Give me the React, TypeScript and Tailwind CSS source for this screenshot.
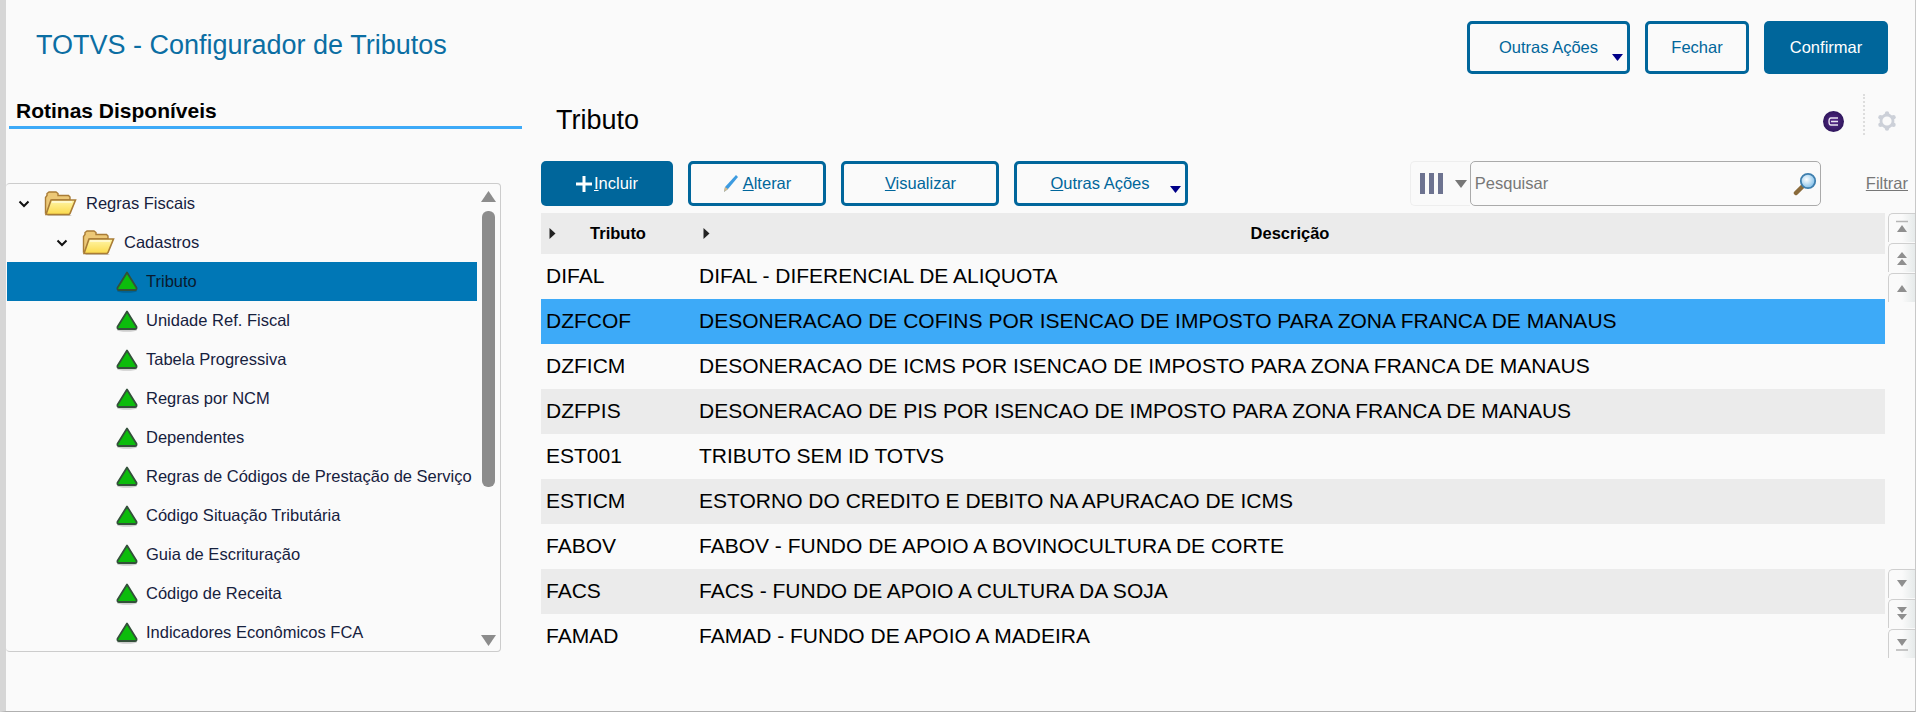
const treeItems = [
  "Tributo",
  "Unidade Ref. Fiscal",
  "Tabela Progressiva",
  "Regras por NCM",
  "Dependentes",
  "Regras de Códigos de Prestação de Serviço",
  "Código Situação Tributária",
  "Guia de Escrituração",
  "Código de Receita",
  "Indicadores Econômicos FCA",
];

const rows = [
  ["DIFAL", "DIFAL - DIFERENCIAL DE ALIQUOTA"],
  ["DZFCOF", "DESONERACAO DE COFINS POR ISENCAO DE IMPOSTO PARA ZONA FRANCA DE MANAUS"],
  ["DZFICM", "DESONERACAO DE ICMS POR ISENCAO DE IMPOSTO PARA ZONA FRANCA DE MANAUS"],
  ["DZFPIS", "DESONERACAO DE PIS POR ISENCAO DE IMPOSTO PARA ZONA FRANCA DE MANAUS"],
  ["EST001", "TRIBUTO SEM ID TOTVS"],
  ["ESTICM", "ESTORNO DO CREDITO E DEBITO NA APURACAO DE ICMS"],
  ["FABOV", "FABOV - FUNDO DE APOIO A BOVINOCULTURA DE CORTE"],
  ["FACS", "FACS - FUNDO DE APOIO A CULTURA DA SOJA"],
  ["FAMAD", "FAMAD - FUNDO DE APOIO A MADEIRA"],
];

const Chevron = () => (
  <svg width="12" height="8" viewBox="0 0 12 8" className="shrink-0">
    <path d="M1.500 1.500 6 6l4.500-4.500" fill="none" stroke="#111" strokeWidth="2" />
  </svg>
);

const Folder = ({ id }: { id: string }) => (
  <svg width="33" height="26" viewBox="0 0 33 26" className="shrink-0">
    <defs>
      <linearGradient id={id} x1="0" y1="0" x2="0" y2="1">
        <stop offset="0" stopColor="#fff6a8" />
        <stop offset="1" stopColor="#fbd94a" />
      </linearGradient>
    </defs>
    <path d="M3 25h23l2-1-24 0z" fill="#c9c4ba" />
    <path
      d="M1.500 22V6.500l1.500-2V2.500L5 1h7l2 1.500v2h10.500l1.500 1.500V9H8L3 22z"
      fill="#ecc877"
      stroke="#a97c36"
      strokeWidth="1.400"
    />
    <path d="M7 9h24.500L26 22.500l-1 1H2z" fill={`url(#${id})`} stroke="#a97c36" strokeWidth="1.600" />
    <path d="M8 11h20" stroke="#fffbe0" strokeWidth="1.400" />
  </svg>
);

const Triangle = () => (
  <svg width="22" height="22" viewBox="0 0 22 22" className="shrink-0">
    <ellipse cx="11" cy="20" rx="10" ry="1.800" fill="#000000" fillOpacity="0.18" />
    <path
      d="M11 1.500 20.500 16.800Q21 19 19 19H3Q1 19 1.500 16.800z"
      fill="#0cbc0c"
      stroke="#33503a"
      strokeWidth="1.800"
      strokeLinejoin="round"
    />
  </svg>
);

const MenuCaret = () => (
  <svg width="11" height="7" viewBox="0 0 11 7" className="absolute right-[4px] bottom-[10px]">
    <path d="M0 0h11L5.500 7z" fill="#000088" />
  </svg>
);

const Gear = () => (
  <svg width="20" height="20" viewBox="0 0 20 20" className="mt-[37px] ml-[12px]">
    <circle cx="10" cy="10" r="6" fill="none" stroke="#ccd0d8" strokeWidth="2.800" />
    <g fill="#ccd0d8">
      <circle cx="10" cy="2.500" r="2.200" />
      <circle cx="16.500" cy="6.200" r="2.200" />
      <circle cx="16.500" cy="13.800" r="2.200" />
      <circle cx="10" cy="17.500" r="2.200" />
      <circle cx="3.500" cy="13.800" r="2.200" />
      <circle cx="3.500" cy="6.200" r="2.200" />
    </g>
  </svg>
);

const Arrows = ({ kind }: { kind: string }) => (
  <svg width="14" height="16" viewBox="0 0 14 16">
    {kind === "first" && <path d="M1 1.500h12" stroke="#b5b5b5" strokeWidth="1.500" />}
    {kind === "first" && <path d="M2 12 7 5l5 7z" fill="#8f8f8f" />}
    {kind === "prev2" && <path d="M2 8 7 2l5 6zM2 15l5-6 5 6z" fill="#8f8f8f" />}
    {kind === "prev" && <path d="M2 12 7 5l5 7z" fill="#8f8f8f" />}
    {kind === "next" && <path d="M2 4h10l-5 7z" fill="#8f8f8f" />}
    {kind === "next2" && <path d="M2 1h10L7 7zM2 8h10l-5 6z" fill="#8f8f8f" />}
    {kind === "last" && <path d="M2 3h10l-5 7z" fill="#8f8f8f" />}
    {kind === "last" && <path d="M1 14h12" stroke="#b5b5b5" strokeWidth="1.500" />}
  </svg>
);

const PageButton = ({ kind }: { kind: string }) => (
  <div className="w-[27px] h-[29px] flex items-center justify-center border-l border-t border-[#cfcfcf] rounded-tl-[5px] bg-gradient-to-r from-[#fafafa] from-50% to-[#e6eaea]">
    <Arrows kind={kind} />
  </div>
);

const TextButton = ({ children, className }: { children: React.ReactNode; className: string }) => (
  <button
    className={`relative flex items-center justify-center border-[3px] border-[#00669b] rounded-[5px] text-[16.5px] text-[#00669b] ${className}`}
  >
    {children}
  </button>
);

const Caret = () => (
  <svg width="7" height="11" viewBox="0 0 7 11" className="shrink-0">
    <path d="M0.500 0 6.500 5.500 0.500 11z" fill="#222" />
  </svg>
);

export default function App() {
  return (
    <div className="w-[1916px] h-[712px] flex flex-col overflow-hidden bg-[#fafafa] border-l-[6px] border-l-[#d6d6d6] border-r border-r-[#c8c8c8] border-b border-b-[#b0b0b0] font-['Liberation_Sans',Arial,sans-serif]">
      {/* top bar */}
      <header className="h-[74px] shrink-0 flex justify-between pt-[21px] pr-[27px]">
        <h1 className="pl-[30px] pt-[9px] text-[27px] leading-[30px] text-[#0b6ea3]">
          TOTVS - Configurador de Tributos
        </h1>
        <div className="flex gap-[15px]">
          <TextButton className="w-[163px] h-[53px]">
            Outras Ações
            <MenuCaret />
          </TextButton>
          <TextButton className="w-[104px] h-[53px]">Fechar</TextButton>
          <button className="w-[124px] h-[53px] rounded-[5px] bg-[#00669b] text-white text-[16.5px]">
            Confirmar
          </button>
        </div>
      </header>

      <div className="flex flex-1 min-h-0">
        {/* left tree */}
        <aside className="w-[535px] shrink-0">
          <div className="mt-[24px] ml-[3px] w-[513px] h-[31px] border-b-[3px] border-[#3daaf8] pl-[7px] text-[21px] leading-[26px] font-bold text-black">
            Rotinas Disponíveis
          </div>
          <div className="mt-[54px] w-[495px] h-[469px] flex border-t border-r border-b border-[#cccccc] rounded-[4px]">
            <div className="w-[471px] shrink-0 pl-[1px] text-[16.5px] text-[#16213e]">
              <div className="h-[39px] flex items-center pl-[11px]">
                <Chevron />
                <div className="ml-[14px]">
                  <Folder id="folder-a" />
                </div>
                <span className="ml-[9px]">Regras Fiscais</span>
              </div>
              <div className="h-[39px] flex items-center pl-[49px]">
                <Chevron />
                <div className="ml-[14px]">
                  <Folder id="folder-b" />
                </div>
                <span className="ml-[9px]">Cadastros</span>
              </div>
              {treeItems.map((item, i) => (
                <div
                  key={item}
                  className={`h-[39px] flex items-center pl-[109px] whitespace-nowrap ${i === 0 ? "bg-[#0077b6] text-[#0a1a2e]" : ""}`}
                >
                  <Triangle />
                  <span className="ml-[8px]">{item}</span>
                </div>
              ))}
            </div>
            <div className="flex-1 flex flex-col items-center pt-[7px] pb-[5px]">
              <svg width="15" height="11" viewBox="0 0 15 11" className="shrink-0">
                <path d="M7.500 0 15 11H0z" fill="#8c8c8c" />
              </svg>
              <div className="mt-[9px] w-[13px] h-[276px] rounded-[6px] bg-[#8c8c8c]" />
              <svg width="15" height="11" viewBox="0 0 15 11" className="mt-auto shrink-0">
                <path d="M0 0h15L7.500 11z" fill="#8c8c8c" />
              </svg>
            </div>
          </div>
        </aside>

        {/* main content */}
        <main className="flex-1 min-w-0">
          <div className="h-[87px] flex justify-between">
            <h2 className="pl-[15px] pt-[31px] text-[27px] leading-[30px] text-black">Tributo</h2>
            <div className="flex items-start pr-[18px]">
              <div className="mt-[37px] w-[21px] h-[21px] rounded-full bg-[radial-gradient(circle,#5a2a8c,#1e0f4a)] flex items-center justify-center">
                <svg width="11" height="9" viewBox="0 0 11 9">
                  <path d="M10 1H3Q1 1 1 4.500T3 8h7M3 4.500h7" fill="none" stroke="#e8e4f0" strokeWidth="1.400" />
                </svg>
              </div>
              <div className="mt-[20px] ml-[19px] h-[41px] border-l-2 border-dotted border-[#dddddd]" />
              <Gear />
            </div>
          </div>

          {/* toolbar */}
          <div className="h-[45px] flex items-stretch">
            <div className="flex gap-[15px]">
              <button className="w-[132px] flex items-center justify-center rounded-[5px] bg-[#00669b] text-[16.5px] text-white">
                <svg width="16" height="16" viewBox="0 0 16 16" className="mr-[2px]">
                  <path d="M8 0v16M0 8h16" stroke="#ffffff" strokeWidth="3" />
                </svg>
                <span>
                  <span className="underline">I</span>ncluir
                </span>
              </button>
              <TextButton className="w-[138px]">
                <svg width="16" height="19" viewBox="0 0 16 19" className="mr-[4px]">
                  <path d="M13 1 15 3 5 15 1 18 2 13z" fill="#3d9be0" />
                  <path d="M1 18 2 13 5 15z" fill="#d8b98a" />
                </svg>
                <span>
                  <span className="underline">A</span>lterar
                </span>
              </TextButton>
              <TextButton className="w-[158px]">
                <span className="pl-[1px]">
                  <span className="underline">V</span>isualizar
                </span>
              </TextButton>
              <TextButton className="w-[174px]">
                <span className="pr-[2px]">
                  <span className="underline">O</span>utras Ações
                </span>
                <MenuCaret />
              </TextButton>
            </div>

            <div className="ml-auto flex items-center pr-[7px]">
              <div className="w-[60px] h-[45px] flex items-center pl-[9px] gap-[11px] border border-r-0 border-[#eeeeee] rounded-l-[5px]">
                <svg width="24" height="21" viewBox="0 0 24 21">
                  <path d="M0 0h5v21H0zM9 0h5v21H9zM18 0h5v21h-5z" fill="#6d7390" />
                </svg>
                <svg width="12" height="8" viewBox="0 0 12 8">
                  <path d="M0 0h12L6 8z" fill="#777777" />
                </svg>
              </div>
              <div className="w-[351px] h-[45px] flex items-center justify-between border border-[#aaaaaa] rounded-[5px] pl-[4px] pr-[3px] text-[16.5px] text-[#777777]">
                <span>Pesquisar</span>
                <svg width="24" height="24" viewBox="0 0 24 24">
                  <defs>
                    <radialGradient id="glass" cx="0.4" cy="0.4" r="0.7">
                      <stop offset="0" stopColor="#ffffff" />
                      <stop offset="1" stopColor="#6fb6e6" />
                    </radialGradient>
                  </defs>
                  <path d="M9.500 14.500 3 21" stroke="#8a6a3a" strokeWidth="4.500" strokeLinecap="round" />
                  <circle cx="15" cy="9" r="7.200" fill="url(#glass)" stroke="#3f7fae" strokeWidth="1.800" />
                </svg>
              </div>
              <span className="ml-[45px] text-[16.5px] text-[#777777] underline">Filtrar</span>
            </div>
          </div>

          {/* table + page buttons */}
          <div className="mt-[7px] flex">
            <table className="w-[1344px] table-fixed border-collapse shrink-0 text-black">
              <colgroup>
                <col className="w-[154px]" />
                <col />
              </colgroup>
              <thead>
                <tr className="h-[41px] bg-[#ebebeb] text-[16.5px] font-bold">
                  <th className="font-bold">
                    <div className="flex items-center pl-[8px]">
                      <Caret />
                      <span className="flex-1 pr-[15px] text-center">Tributo</span>
                    </div>
                  </th>
                  <th className="font-bold">
                    <div className="flex items-center pl-[8px]">
                      <Caret />
                      <span className="flex-1 pr-[15px] text-center">Descrição</span>
                    </div>
                  </th>
                </tr>
              </thead>
              <tbody className="text-[21px]">
                {rows.map((row, i) => (
                  <tr
                    key={row[0]}
                    className={`h-[45px] ${i === 1 ? "bg-[#3daaf8]" : i % 2 === 1 ? "bg-[#ebebeb]" : ""}`}
                  >
                    <td className="pl-[5px] pb-[2px]">{row[0]}</td>
                    <td className="pl-[4px] pb-[2px] whitespace-nowrap">{row[1]}</td>
                  </tr>
                ))}
              </tbody>
            </table>
            <div className="ml-[3px] w-[27px] flex flex-col justify-between pb-[1px]">
              <div className="flex flex-col gap-[1px]">
                <PageButton kind="first" />
                <PageButton kind="prev2" />
                <PageButton kind="prev" />
              </div>
              <div className="flex flex-col gap-[1px]">
                <PageButton kind="next" />
                <PageButton kind="next2" />
                <PageButton kind="last" />
              </div>
            </div>
          </div>
        </main>
      </div>
    </div>
  );
}
